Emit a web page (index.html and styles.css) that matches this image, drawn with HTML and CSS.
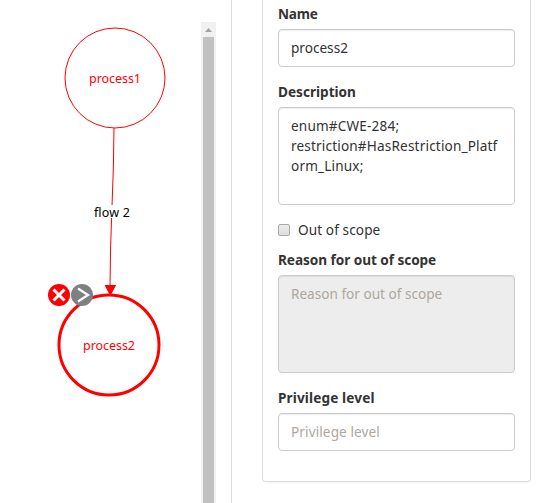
FILE: index.html
```html
<!DOCTYPE html>
<html lang="en">
<head>
<meta charset="utf-8">
<title>Threat model diagram</title>
<link rel="stylesheet" href="styles.css">
</head>
<body>
<main class="workspace">
  <section class="canvas">
    <svg class="diagram" width="201" height="503" viewBox="0 0 201 503">
      <circle class="node" cx="115" cy="78" r="50"/>
      <text class="node-label" x="89" y="82.5" textLength="52">process1</text>
      <path class="flow" d="M114 128C114 180 110 232 110 286"/>
      <path class="arrow" d="M104.7 285H116L110.3 295.5z"/>
      <rect class="flow-bg" x="93" y="205" width="38" height="13"/>
      <text class="flow-label" x="94" y="216.5" textLength="36">flow 2</text>
      <circle class="node selected" cx="109" cy="345" r="50"/>
      <path class="arrow" d="M104.7 285H116L110.3 295.5z"/>
      <text class="node-label" x="83" y="349.5" textLength="52">process2</text>
      <circle class="remove" cx="59" cy="295" r="11"/>
      <path class="remove-mark" d="M53.500 289.500l11 11M64.500 289.500l-11 11"/>
      <circle class="link" cx="82" cy="295" r="11"/>
      <path class="link-mark" d="M78 288.500l10 6.500-10 6.500"/>
    </svg>
    <div class="scrollbar"><span class="scroll-up"></span><div class="thumb"></div></div>
  </section>
  <section class="side">
    <form class="panel">
      <div class="group">
        <label class="name-label" for="name">Name</label>
        <input class="control" id="name" type="text" value="process2">
      </div>
      <div class="group">
        <label class="description-label" for="description">Description</label>
        <textarea class="control area description" id="description" spellcheck="false">enum#CWE-284;
restriction#HasRestriction_Platform_Linux;</textarea>
      </div>
      <label class="check"><input type="checkbox"><span>Out of scope</span></label>
      <div class="group">
        <label class="reason-label" for="reason">Reason for out of scope</label>
        <textarea class="control area reason" id="reason" placeholder="Reason for out of scope" disabled></textarea>
      </div>
      <div class="group">
        <label class="privilege-label" for="privilege">Privilege level</label>
        <input class="control privilege" id="privilege" type="text" placeholder="Privilege level">
      </div>
    </form>
  </section>
</main>
</body>
</html>
```
FILE: styles.css
```css
* { box-sizing: border-box; }
body {
  margin: 0;
  height: 503px;
  overflow: hidden;
  background: #fff;
  color: #333;
  font: 13.6px/20px "Noto Sans", sans-serif;
}
.workspace { display: flex; height: 503px; }
.canvas { display: flex; width: 231px; }
.diagram { display: block; flex: none; }
.node { fill: #fff; stroke: red; stroke-width: 1; }
.selected { stroke-width: 3; }
.node-label, .flow-label { font-size: 12.5px; fill: red; }
.flow-label { fill: #000; }
.flow { fill: none; stroke: red; stroke-width: 1; }
.arrow, .remove { fill: red; }
.flow-bg { fill: #fff; }
.link { fill: gray; }
.remove-mark { stroke: #fff; stroke-width: 3; }
.link-mark { fill: none; stroke: #fff; stroke-width: 2.2; }
.scrollbar {
  width: 15px;
  margin-top: 22px;
  padding: 0 2px;
  background: #f1f1f1;
}
.scroll-up {
  display: block;
  width: 7px;
  height: 4px;
  margin: 6px 2px 5px;
  background: #a3a3a3;
  clip-path: polygon(50% 0, 100% 100%, 0 100%);
}
.thumb { height: 466px; background: #c1c1c1; }
.side { flex: 1; border-left: 1px solid #ddd; padding-left: 30px; }
.panel {
  width: 269px;
  height: 482px;
  padding: 4px 15px 0;
  border: 1px solid #ddd;
  border-top: 0;
  border-radius: 0 0 4px 4px;
  box-shadow: 0 1px 1px rgba(0, 0, 0, .05);
}
.group { margin-bottom: 15px; }
.group label { display: block; margin-bottom: 5px; font-weight: 700; white-space: nowrap; }
.group .name-label { letter-spacing: -.2px; }
.group .reason-label { letter-spacing: -.05px; }
.group .privilege-label { letter-spacing: .13px; }
.control {
  display: block;
  width: 100%;
  height: 38px;
  margin: 0;
  padding: 7px 12px 9px;
  border: 1px solid #ccc;
  border-radius: 4px;
  background: #fff;
  box-shadow: inset 0 1px 1px rgba(0, 0, 0, .075);
  color: #333;
  font: inherit;
  letter-spacing: 0;
}
.area { height: 98px; padding: 8px 12px; resize: none; overflow: hidden; }
.description { letter-spacing: .16px; }
.privilege { letter-spacing: .1px; }
.control::placeholder { color: #aea79f; opacity: 1; }
.control:disabled { background: #ededed; }
.check { display: flex; align-items: center; height: 20px; margin-bottom: 10px; letter-spacing: .1px; }
.check input {
  appearance: none;
  width: 12px;
  height: 12px;
  margin: 0 8px 0 0;
  border: 1px solid #a8a8a8;
  border-radius: 2px;
  background: linear-gradient(#ededed, #dedede);
}
```
